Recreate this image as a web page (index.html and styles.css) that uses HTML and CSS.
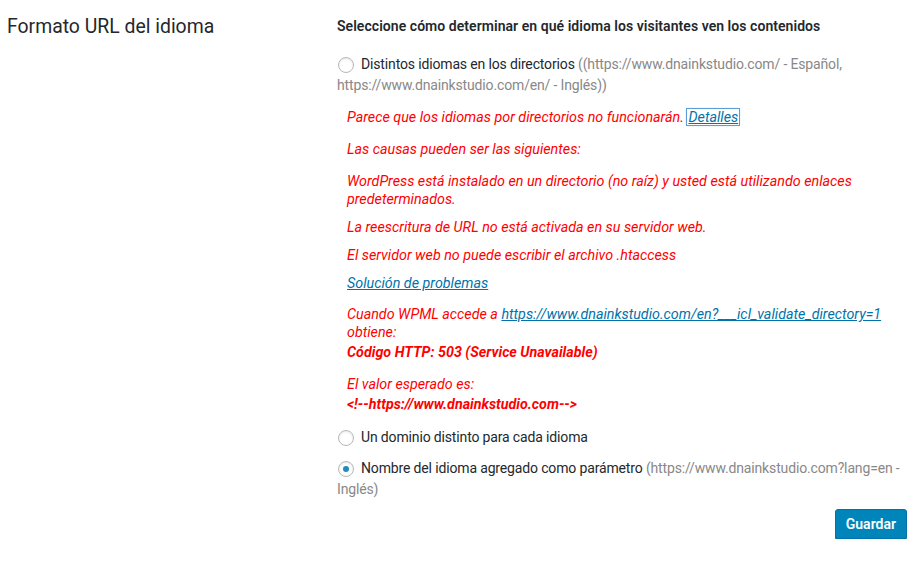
FILE: index.html
```html
<!DOCTYPE html>
<html lang="es">
<head>
<meta charset="utf-8">
<link rel="stylesheet" href="styles.css">
</head>
<body>
<div class="row">
  <div class="label">Formato URL del idioma</div>
  <div class="field">
    <h4 class="heading">Seleccione cómo determinar en qué idioma los visitantes ven los contenidos</h4>
    <label class="option first">
      <span class="radio"></span>Distintos idiomas en los directorios <span class="muted">((https://www.dnainkstudio.com/ - Español, https://www.dnainkstudio.com/en/ - Inglés))</span>
    </label>
    <div class="errors">
      <p class="e1">Parece que los idiomas por directorios no funcionarán. <a href="#" class="focus">Detalles</a></p>
      <p class="e2">Las causas pueden ser las siguientes:</p>
      <p class="e2">WordPress está instalado en un directorio (no raíz) y usted está utilizando enlaces predeterminados.</p>
      <p class="e3">La reescritura de URL no está activada en su servidor web.</p>
      <p class="e3">El servidor web no puede escribir el archivo .htaccess</p>
      <p class="e3"><a href="#">Solución de problemas</a></p>
      <p class="e4">Cuando WPML accede a <a href="#">https://www.dnainkstudio.com/en?___icl_validate_directory=1</a> obtiene:<strong class="blk">Código HTTP: 503 (Service Unavailable)</strong></p>
      <p class="e2">El valor esperado es:<strong class="blk">&lt;!--https://www.dnainkstudio.com--&gt;</strong></p>
    </div>
    <label class="option second">
      <span class="radio"></span>Un dominio distinto para cada idioma
    </label>
    <label class="option third">
      <span class="radio checked"></span>Nombre del idioma agregado como parámetro <span class="muted">(https://www.dnainkstudio.com?lang=en - Inglés)</span>
    </label>
    <div class="actions">
      <button class="btn" type="button">Guardar</button>
    </div>
  </div>
</div>
</body>
</html>
```
FILE: styles.css
```css
* { box-sizing: border-box; }
html, body { margin: 0; padding: 0; background: #fff; }
body {
  font-family: Roboto, "Liberation Sans", sans-serif;
  color: #23282d;
  font-size: 14px;
}
.row {
  display: flex;
  padding-left: 7px;
  padding-top: 12px;
}
.label {
  width: 330px;
  flex: none;
  font-size: 19.4px;
  line-height: 30px;
  color: #23282d;
}
.field {
  width: 572px;
  flex: none;
}
.heading {
  margin: 4px 0 0;
  font-size: 14px;
  font-weight: 600;
  line-height: 20px;
  letter-spacing: 0.05px;
}
.option {
  display: block;
  line-height: 21px;
  font-size: 14px;
  letter-spacing: -0.15px;
}
.option.first { margin-top: 18px; }
.option.second { margin-top: 14px; }
.option.third { margin-top: 10px; }
.muted { color: #888; }
.radio {
  display: inline-block;
  width: 16px;
  height: 16px;
  border: 1px solid #b4b9be;
  border-radius: 50%;
  vertical-align: -4px;
  margin: 0 7px 0 1px;
  box-shadow: inset 0 1px 2px rgba(0,0,0,0.1);
  position: relative;
  background: #fff;
}
.radio.checked::after {
  content: "";
  position: absolute;
  left: 4px;
  top: 4px;
  width: 6px;
  height: 6px;
  border-radius: 50%;
  background: #1e8cbe;
}
.errors {
  padding-left: 10px;
  color: #ff0000;
  font-style: italic;
  font-size: 14.3px;
  line-height: 18px;
  margin-top: 12px;
}
.errors p { margin: 0; }
.errors .e1 { margin-top: 0; }
.errors .e2 { margin-top: 14px; }
.errors .e3 { margin-top: 10px; }
.errors .e4 { margin-top: 13px; }
.errors a { color: #0073aa; text-decoration: underline; }
.errors a.focus {
  outline: 1px solid #5b9dd9;
  box-shadow: 0 0 2px rgba(30,140,190,0.8);
  padding: 0 1px;
}
.blk { display: block; margin-top: 2px; line-height: 18px; }
.actions {
  display: flex;
  justify-content: flex-end;
  margin-top: 9px;
}
.btn {
  background: #0085ba;
  border: 1px solid #0073aa;
  border-radius: 3px;
  color: #fff;
  font-family: inherit;
  font-size: 14px;
  font-weight: 600;
  height: 30px;
  padding: 0 10px 1px;
  box-shadow: 0 1px 0 #006799;
  margin-right: 2px;
}
```
